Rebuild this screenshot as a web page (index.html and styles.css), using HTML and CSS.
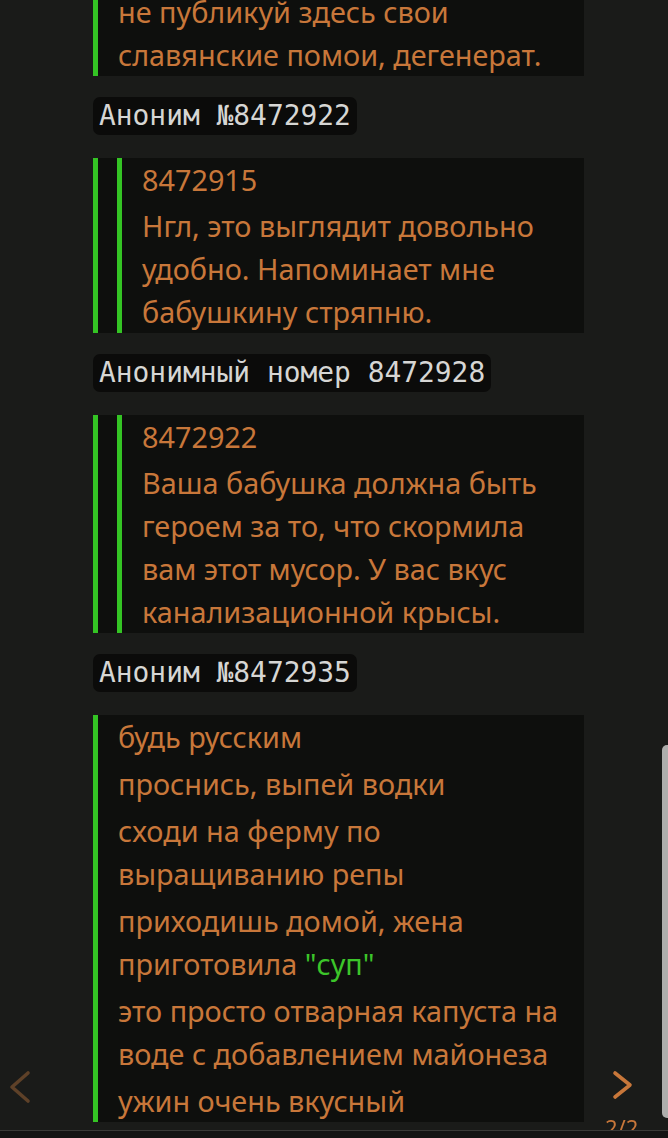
FILE: index.html
```html
<!DOCTYPE html>
<html lang="ru">
<head>
<meta charset="utf-8">
<title>Тред</title>
<link rel="stylesheet" href="styles.css">
</head>
<body>
<main class="thread">
  <article class="post post-first">
    <p>не публикуй здесь свои<br>славянские помои, дегенерат.</p>
  </article>

  <div class="name">Аноним №8472922</div>
  <article class="post">
    <blockquote class="quote">
      <div class="ref">8472915</div>
      <p>Нгл, это выглядит довольно<br>удобно. Напоминает мне<br>бабушкину стряпню.</p>
    </blockquote>
  </article>

  <div class="name">Анонимный номер 8472928</div>
  <article class="post">
    <blockquote class="quote">
      <div class="ref">8472922</div>
      <p>Ваша бабушка должна быть<br>героем за то, что скормила<br>вам этот мусор. У вас вкус<br>канализационной крысы.</p>
    </blockquote>
  </article>

  <div class="name">Аноним №8472935</div>
  <article class="post">
    <p>будь русским</p>
    <p>проснись, выпей водки</p>
    <p>сходи на ферму по<br>выращиванию репы</p>
    <p>приходишь домой, жена<br>приготовила <span class="green">"суп"</span></p>
    <p>это просто отварная капуста на<br>воде с добавлением майонеза</p>
    <p>ужин очень вкусный</p>
  </article>
</main>

<div class="scrollbar"></div>

<button class="nav nav-prev" aria-label="Назад">
  <svg width="24" height="34" viewBox="0 0 24 34"><path d="M20 3 L4 17 L20 31" fill="none" stroke="currentColor" stroke-width="3.6" stroke-linecap="round" stroke-linejoin="round"/></svg>
</button>
<button class="nav nav-next" aria-label="Вперёд">
  <svg width="24" height="30" viewBox="0 0 24 30"><path d="M4 3 L19 15 L4 27" fill="none" stroke="currentColor" stroke-width="3.6" stroke-linecap="round" stroke-linejoin="round"/></svg>
</button>
<div class="pager">2/2</div>
<div class="bottom-bar"></div>
</body>
</html>
```

FILE: styles.css
```css
html, body {
  margin: 0;
  padding: 0;
}

body {
  background: #1a1b19;
  font-family: "Noto Sans", "Open Sans", sans-serif;
  height: 1138px;
  overflow: hidden;
}

.thread {
  width: 491px;
  margin: -10px 0 0 93px;
  display: flex;
  flex-direction: column;
}

.post {
  background: #0e0f0d;
  border-left: 5px solid #34c424;
  padding-left: 20px;
  color: #c8773a;
  font-size: 28.8px;
  line-height: 43px;
  white-space: nowrap;
}

.post p {
  margin: 0;
}

.post p + p {
  margin-top: 4px;
}

.quote {
  margin: 0 0 0 -1px;
  border-left: 5px solid #34c424;
  padding-left: 20px;
}

.ref {
  margin-bottom: 3px;
}

.green {
  color: #3cc52a;
}

.name {
  align-self: flex-start;
  margin: 21px 0 23px;
  padding: 0 6px;
  background: #0b0b0a;
  color: #d6d6d4;
  font-family: "DejaVu Sans Mono", "Liberation Mono", monospace;
  font-size: 27.9px;
  line-height: 38px;
  border-radius: 7px;
}

.scrollbar {
  position: fixed;
  right: 0;
  top: 745px;
  width: 6px;
  height: 373px;
  background: #aeaeac;
  border-radius: 5px 0 0 5px;
}

.nav {
  position: fixed;
  padding: 0;
  border: 0;
  background: none;
  display: block;
}

.nav svg {
  display: block;
}

.nav-prev {
  left: 8px;
  top: 1070px;
  color: #5e4128;
}

.nav-next {
  left: 611px;
  top: 1070px;
  color: #c8773a;
}

.pager {
  position: fixed;
  left: 605px;
  top: 1114px;
  color: #c8773a;
  font-size: 22px;
  line-height: 26px;
}

.bottom-bar {
  position: fixed;
  left: 0;
  right: 0;
  bottom: 0;
  height: 7px;
  background: #141414;
  border-top: 1px solid #3a3a38;
}
```
